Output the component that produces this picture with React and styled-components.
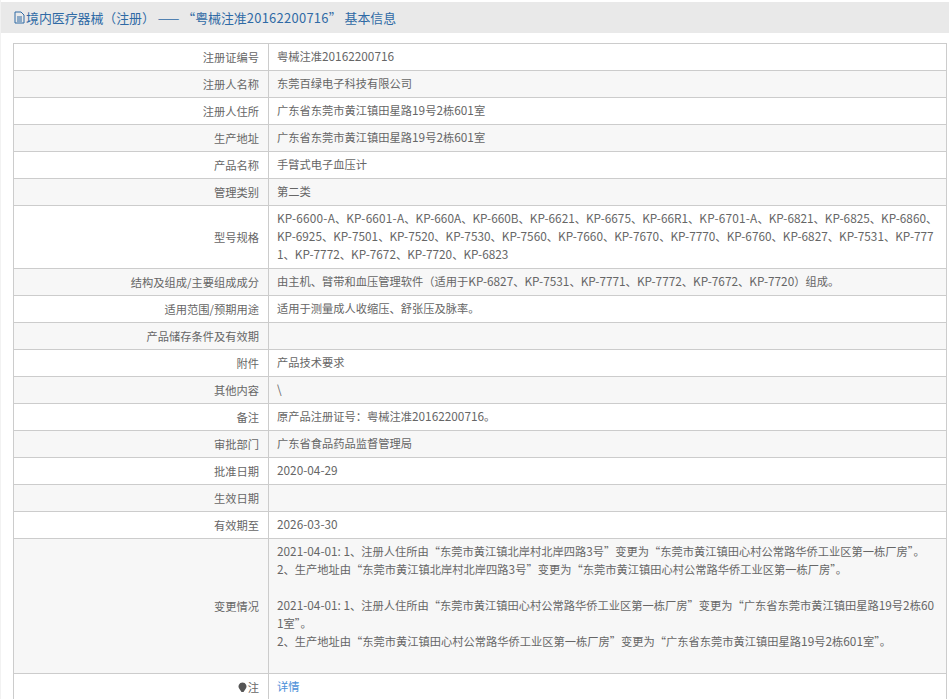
import React from "react";
import styled, { createGlobalStyle } from "styled-components";

const Global = createGlobalStyle`
  html, body { margin: 0; padding: 0; background: #fff; }
  body { font-family: "Noto Sans CJK SC", "Liberation Sans", sans-serif; font-size: 11.25px; color: #666; overflow: hidden; }
`;
const Page = styled.div`
  height: 699px; overflow: hidden; padding-top: 2px; background: #fff; box-sizing: border-box;
  border-left: 1px solid #f2f2f2;
`;
const Header = styled.div`
  height: 31px; background: #e9e9e9; display: flex; align-items: center; padding-left: 13px;
  color: #2f6aa5; font-size: 12.9px; gap: 1px;
`;
const Table = styled.div`
  margin: 10px 0 0 12px; border: solid #ccc; border-width: 1px 1px 0 1px; width: 934px; box-sizing: border-box;
`;
const Row = styled.div`
  display: grid; grid-template-columns: 255px 1fr; background: ${p => (p.$odd ? "#f7f7f7" : "#fff")};
  border-bottom: 1px solid #ccc; min-height: 26px;
`;
const Label = styled.div`
  display: flex; align-items: center; justify-content: flex-end; padding-right: 9px; border-right: 1px solid #ccc;
  gap: 1px;
`;
const Value = styled.div`
  padding: 3px 7px 5px 8px; line-height: 18px; word-break: break-all; white-space: pre-wrap;
`;
const More = styled.a` color: #4a90d9; text-decoration: none; `;
const Latin = styled.span` font-size: 11.8px; line-height: 1; letter-spacing: ${p => (p.$wide ? "0.2px" : "0")}; `;
const HeadDigits = styled.span` letter-spacing: 0.3px; `;

const T = ({ s }) =>
  s.split(/([A-Za-z0-9\-:\\]+)/).map((x, i) =>
    i % 2 ? <Latin key={i} $wide={x.endsWith("-A")}>{x}</Latin> : x
  );

const DocIcon = () => (
  <svg width="11" height="13" viewBox="0 0 11 13" fill="none" stroke="#2f6aa5" strokeWidth="1">
    <path d="M1 1h6l3 3v8H1z" />
    <path d="M3 6h5M3 8h5M3 10h5" />
  </svg>
);
const Bulb = () => (
  <svg width="9" height="11" viewBox="0 0 9 11">
    <path d="M4.5 0.5a4 4 0 0 1 3 6.6L5.5 10h-2L1.5 7.1a4 4 0 0 1 3-6.6z" fill="#555" />
  </svg>
);

const rows = [
  ["注册证编号", "粤械注准20162200716"],
  ["注册人名称", "东莞百绿电子科技有限公司"],
  ["注册人住所", "广东省东莞市黄江镇田星路19号2栋601室"],
  ["生产地址", "广东省东莞市黄江镇田星路19号2栋601室"],
  ["产品名称", "手臂式电子血压计"],
  ["管理类别", "第二类"],
  ["型号规格", "KP-6600-A、KP-6601-A、KP-660A、KP-660B、KP-6621、KP-6675、KP-66R1、KP-6701-A、KP-6821、KP-6825、KP-6860、KP-6925、KP-7501、KP-7520、KP-7530、KP-7560、KP-7660、KP-7670、KP-7770、KP-6760、KP-6827、KP-7531、KP-7771、KP-7772、KP-7672、KP-7720、KP-6823"],
  ["结构及组成/主要组成成分", "由主机、臂带和血压管理软件（适用于KP-6827、KP-7531、KP-7771、KP-7772、KP-7672、KP-7720）组成。"],
  ["适用范围/预期用途", "适用于测量成人收缩压、舒张压及脉率。"],
  ["产品储存条件及有效期", ""],
  ["附件", "产品技术要求"],
  ["其他内容", "\\"],
  ["备注", "原产品注册证号：粤械注准20162200716。"],
  ["审批部门", "广东省食品药品监督管理局"],
  ["批准日期", "2020-04-29"],
  ["生效日期", ""],
  ["有效期至", "2026-03-30"],
  ["变更情况", "2021-04-01: 1、注册人住所由“东莞市黄江镇北岸村北岸四路3号”变更为“东莞市黄江镇田心村公常路华侨工业区第一栋厂房”。\n2、生产地址由“东莞市黄江镇北岸村北岸四路3号”变更为“东莞市黄江镇田心村公常路华侨工业区第一栋厂房”。\n\n2021-04-01: 1、注册人住所由“东莞市黄江镇田心村公常路华侨工业区第一栋厂房”变更为“广东省东莞市黄江镇田星路19号2栋601室”。\n2、生产地址由“东莞市黄江镇田心村公常路华侨工业区第一栋厂房”变更为“广东省东莞市黄江镇田星路19号2栋601室”。\n\u00a0"],
];

export default function App() {
  return (
    <Page>
      <Global />
      <Header>
        <DocIcon />
        <span>境内医疗器械（注册） —— “粤械注准<HeadDigits>20162200716</HeadDigits>” 基本信息</span>
      </Header>
      <Table>
        {rows.map(([k, v], i) => (
          <Row key={k} $odd={i % 2 === 1}>
            <Label>{k}</Label>
            <Value><T s={v} /></Value>
          </Row>
        ))}
        <Row>
          <Label><Bulb />注</Label>
          <Value><More href="#">详情</More></Value>
        </Row>
      </Table>
    </Page>
  );
}
